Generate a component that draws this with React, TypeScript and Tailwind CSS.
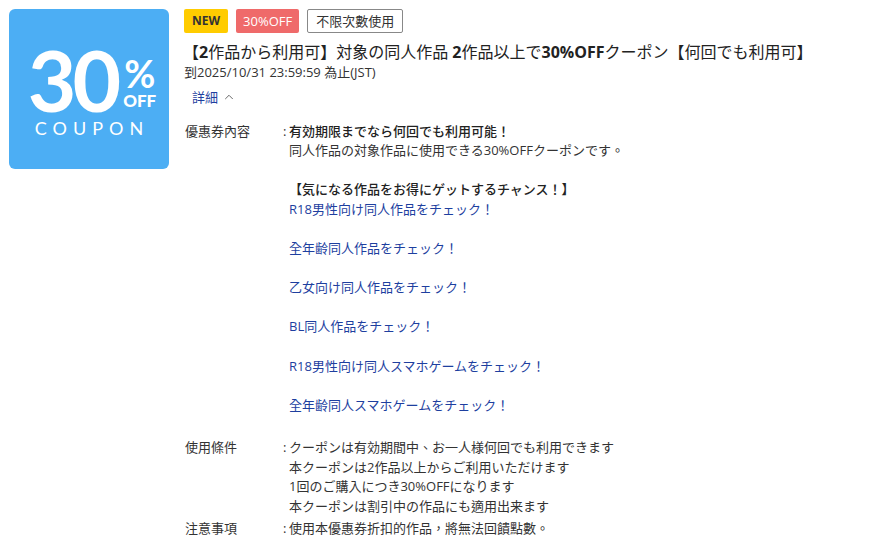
import { ChevronUp } from 'lucide-react';

const FONT = '"Open Sans", "Noto Sans CJK TC", "Noto Sans CJK JP", sans-serif';

interface Line {
  text: string;
  kind?: 'strong' | 'link';
}

const contentLines: Line[] = [
  { text: '有効期限までなら何回でも利用可能！', kind: 'strong' },
  { text: '同人作品の対象作品に使用できる30%OFFクーポンです。' },
  { text: '' },
  { text: '【気になる作品をお得にゲットするチャンス！】', kind: 'strong' },
  { text: 'R18男性向け同人作品をチェック！', kind: 'link' },
  { text: '' },
  { text: '全年齢同人作品をチェック！', kind: 'link' },
  { text: '' },
  { text: '乙女向け同人作品をチェック！', kind: 'link' },
  { text: '' },
  { text: 'BL同人作品をチェック！', kind: 'link' },
  { text: '' },
  { text: 'R18男性向け同人スマホゲームをチェック！', kind: 'link' },
  { text: '' },
  { text: '全年齢同人スマホゲームをチェック！', kind: 'link' },
  { text: '' },
];

const conditionLines: Line[] = [
  { text: 'クーポンは有効期間中、お一人様何回でも利用できます' },
  { text: '本クーポンは2作品以上からご利用いただけます' },
  { text: '1回のご購入につき30%OFFになります' },
  { text: '本クーポンは割引中の作品にも適用出来ます' },
];

const noteLines: Line[] = [{ text: '使用本優惠券折扣的作品，將無法回饋點數。' }];

const CouponImage = () => (
  <div className="w-[160px] h-[160px] shrink-0 rounded-[6px] bg-[#4caef4] text-white flex flex-col items-center pt-[36px]">
    <div className="flex items-start ml-[6px]" style={{ fontFamily: '"Lato", sans-serif' }}>
      <span className="text-[84px] font-bold leading-[70px] tracking-[-4px]">30</span>
      <div className="flex flex-col items-center ml-[6px] mt-[11px]">
        <span className="text-[38px] font-bold leading-[34px]">%</span>
        <span className="text-[17px] font-black leading-[15px] mt-[3px]">OFF</span>
      </div>
    </div>
    <div
      className="text-[18px] leading-[18px] tracking-[6px] mt-[4px] ml-[6px]"
      style={{ fontFamily: '"Lato", sans-serif' }}
    >
      COUPON
    </div>
  </div>
);

const DetailRow = ({ label, lines }: { label: string; lines: Line[] }) => (
  <div className="flex py-[1.5px]">
    <div className="w-[98px] shrink-0">{label}</div>
    <div className="w-[6px] shrink-0">:</div>
    <div className="flex flex-col">
      {lines.map((line, i) => (
        <div
          key={i}
          className={
            line.kind === 'link'
              ? 'text-[#1e3f9f]'
              : line.kind === 'strong'
                ? 'font-medium text-[#222]'
                : ''
          }
        >
          {line.text || '\u00a0'}
        </div>
      ))}
    </div>
  </div>
);

export default function App() {
  return (
    <div className="w-[871px] h-[548px] bg-white text-[#333] overflow-hidden" style={{ fontFamily: FONT }}>
      <div className="flex gap-[15px] p-[9px]">
        <CouponImage />

        <div className="flex flex-col">
          <div className="flex gap-[8px] h-[24px]">
            <span className="px-[8px] rounded-[2px] bg-[#ffcc00] text-[#333] text-[12px] font-bold leading-[24px]">
              NEW
            </span>
            <span className="px-[7px] rounded-[2px] bg-[#ef6a6a] text-white text-[13px] leading-[24px]">
              30%OFF
            </span>
            <span className="px-[8px] rounded-[2px] border border-[#888] text-[#333] text-[13px] leading-[22px]">
              不限次數使用
            </span>
          </div>

          <h1 className="mt-[7px] text-[16px] leading-[24px] text-[#222] -ml-[1px]">
            【<b>2</b>作品から利用可】対象の同人作品 <b>2</b>作品以上で<b>30%OFF</b>クーポン【何回でも利用可】
          </h1>
          <div className="text-[13px] leading-[18px] -mt-[1px]">到2025/10/31 23:59:59 為止(JST)</div>
          <button className="mt-[6px] ml-[8px] flex items-center gap-[4px] text-[13px] leading-[20px] text-[#1e3f9f] self-start">
            詳細
            <ChevronUp size={14} strokeWidth={1.5} className="text-[#555]" />
          </button>

          <div className="mt-[13px] ml-[1px] text-[13px] leading-[19.6px]">
            <DetailRow label="優惠券內容" lines={contentLines} />
            <DetailRow label="使用條件" lines={conditionLines} />
            <DetailRow label="注意事項" lines={noteLines} />
          </div>
        </div>
      </div>
    </div>
  );
}
